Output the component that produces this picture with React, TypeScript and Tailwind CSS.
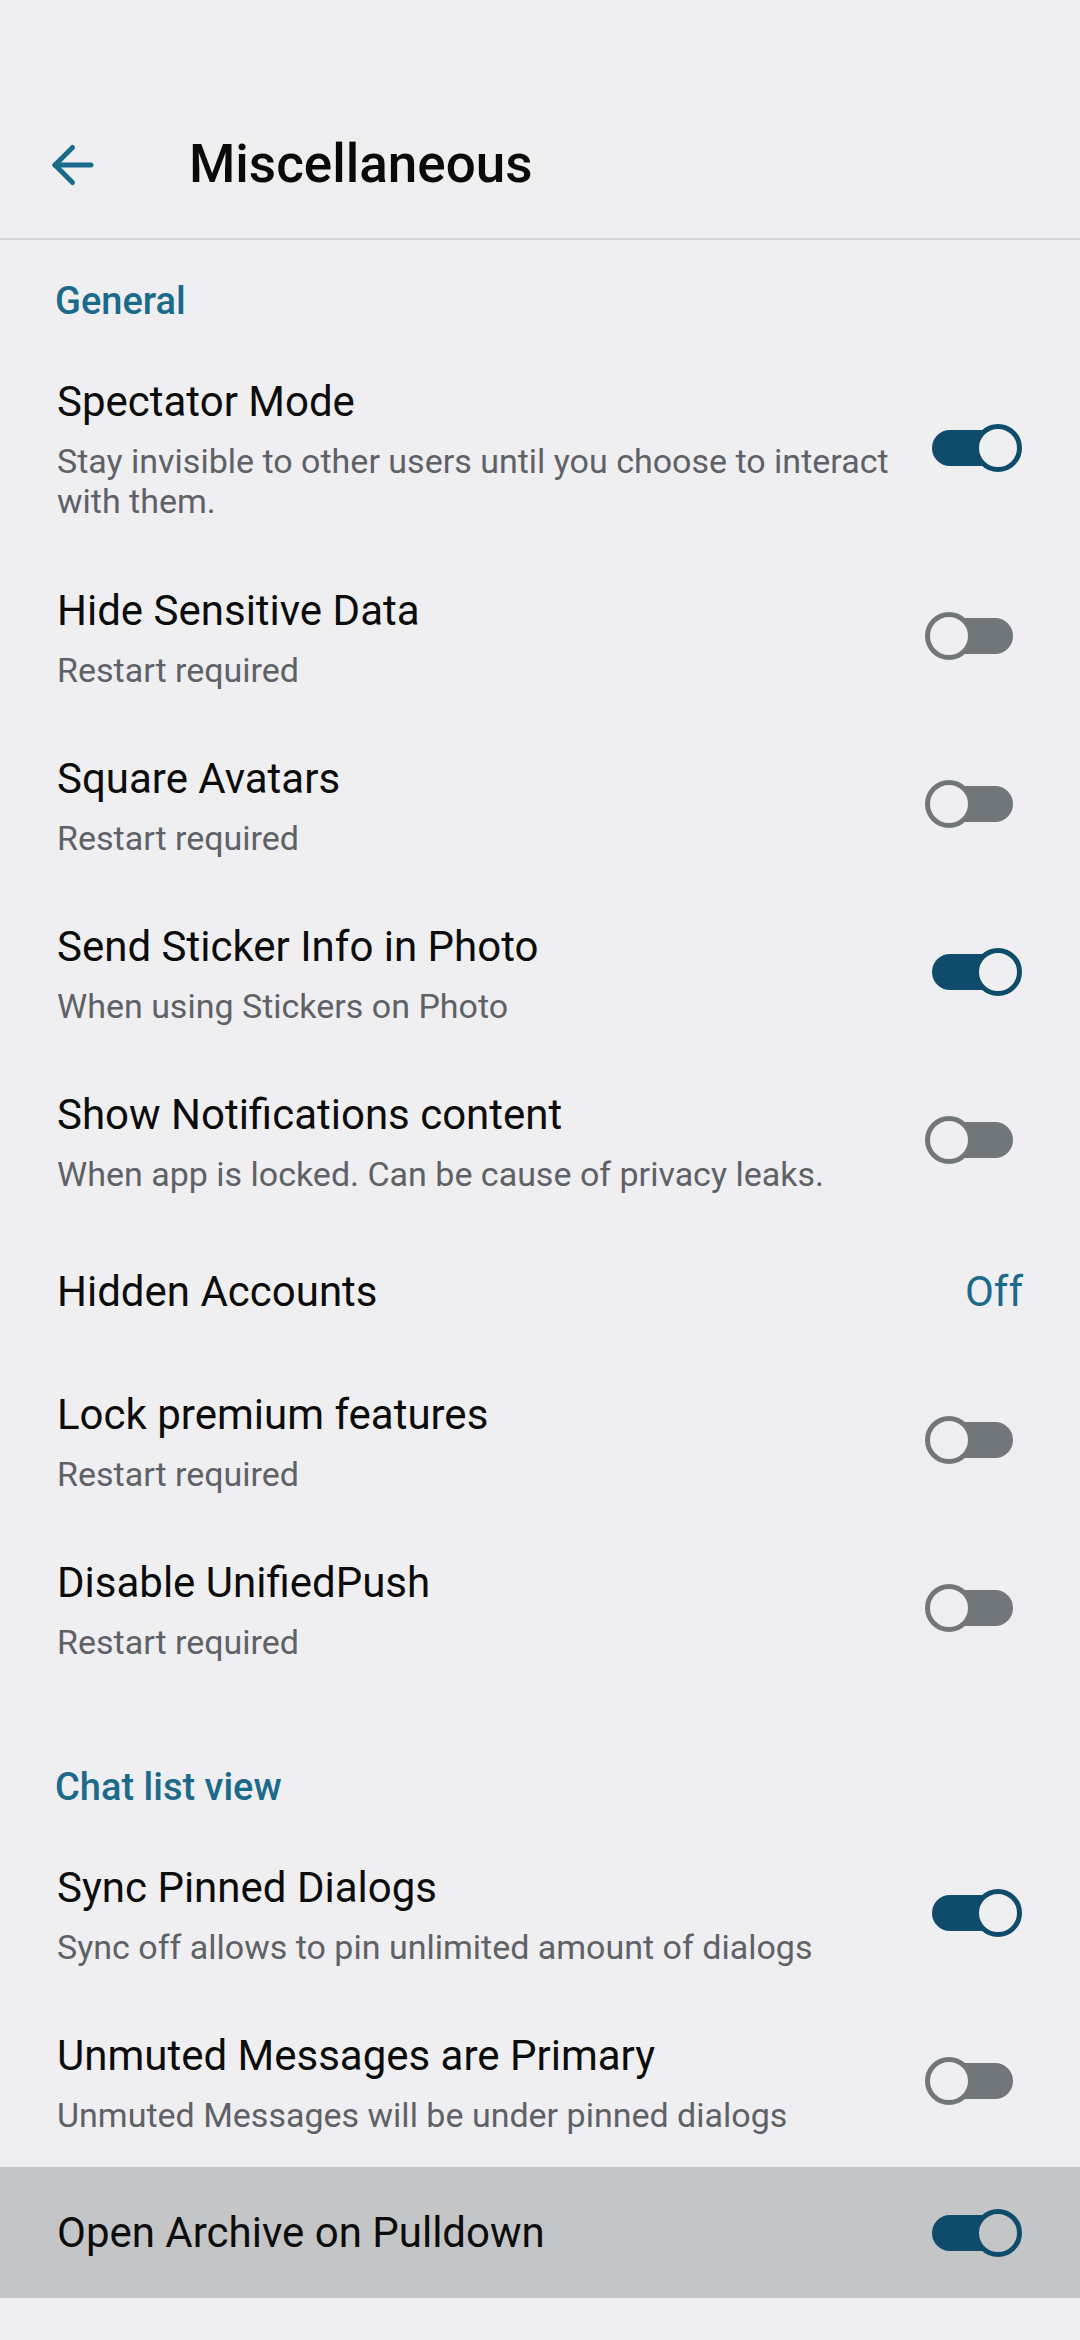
import React from "react";

type Row =
	| { kind: "header"; label: string; gap?: boolean }
	| { kind: "check"; title: string; sub?: string; on: boolean; highlight?: boolean }
	| { kind: "value"; title: string; value: string };

const rows: Row[] = [
	{ kind: "header", label: "General" },
	{
		kind: "check",
		title: "Spectator Mode",
		sub: "Stay invisible to other users until you choose to interact with them.",
		on: true,
	},
	{ kind: "check", title: "Hide Sensitive Data", sub: "Restart required", on: false },
	{ kind: "check", title: "Square Avatars", sub: "Restart required", on: false },
	{ kind: "check", title: "Send Sticker Info in Photo", sub: "When using Stickers on Photo", on: true },
	{
		kind: "check",
		title: "Show Notifications content",
		sub: "When app is locked. Can be cause of privacy leaks.",
		on: false,
	},
	{ kind: "value", title: "Hidden Accounts", value: "Off" },
	{ kind: "check", title: "Lock premium features", sub: "Restart required", on: false },
	{ kind: "check", title: "Disable UnifiedPush", sub: "Restart required", on: false },
	{ kind: "header", label: "Chat list view", gap: true },
	{
		kind: "check",
		title: "Sync Pinned Dialogs",
		sub: "Sync off allows to pin unlimited amount of dialogs",
		on: true,
	},
	{
		kind: "check",
		title: "Unmuted Messages are Primary",
		sub: "Unmuted Messages will be under pinned dialogs",
		on: false,
	},
	{ kind: "check", title: "Open Archive on Pulldown", on: true, highlight: true },
	{ kind: "check", title: "", on: false },
];

function Toggle({ on, highlight }: { on: boolean; highlight?: boolean }) {
	const knobBg = highlight ? "bg-[#c4c5c7]" : "bg-[#efeff1]";
	return (
		<div className="relative h-[48px] w-[97px] shrink-0">
			<div
				className={`absolute left-[7px] top-[6px] h-[36px] w-[81px] rounded-full ${
					on ? "bg-[#0f4c6b]" : "bg-[#71767b]"
				}`}
			/>
			<div
				className={`absolute top-0 h-[48px] w-[48px] rounded-full border-[5px] ${knobBg} ${
					on ? "left-[49px] border-[#0f4c6b]" : "left-0 border-[#71767b]"
				}`}
			/>
		</div>
	);
}

function CheckRow({ row, tall }: { row: Extract<Row, { kind: "check" }>; tall?: boolean }) {
	const bg = row.highlight ? "bg-[#c4c5c7]" : "";
	if (!row.sub) {
		return (
			<div className={`flex h-[131px] items-center gap-[20px] pl-[57px] pr-[58px] ${bg}`}>
				<div className="flex-1 text-[42px] leading-[50px] text-[#0c0c0c]">{row.title}</div>
				<Toggle on={row.on} highlight={row.highlight} />
			</div>
		);
	}
	return (
		<div className={`flex min-h-[168px] items-center gap-[20px] pl-[57px] pr-[58px] ${bg}`}>
			<div className={`flex-1 self-start pt-[32px] ${tall ? "pb-[33px]" : "pb-[32px]"}`}>
				<div className="text-[42px] leading-[50px] text-[#0c0c0c]">{row.title}</div>
				<div className="mt-[14px] text-[34px] leading-[40px] text-[#5e6166]">{row.sub}</div>
			</div>
			<div className="mb-[4px]">
				<Toggle on={row.on} highlight={row.highlight} />
			</div>
		</div>
	);
}

export default function App() {
	return (
		<div className="min-h-screen bg-[#efeff1] font-['Roboto',sans-serif]">
			<header className="border-b-[2px] border-[#d5d5d8] pt-[92px]">
				<div className="flex h-[146px] items-center">
					<svg
						className="ml-[49px] h-[48px] w-[48px]"
						viewBox="0 0 48 48"
						fill="none"
						stroke="#1a6a8b"
						strokeWidth="5"
						strokeLinecap="round"
						strokeLinejoin="round"
					>
						<path d="M6 24H42" />
						<path d="M6 24L23.5 6.5" />
						<path d="M6 24L23.5 41.5" />
					</svg>
					<h1 className="ml-[92px] text-[53px] font-medium text-[#0a0a0a]">Miscellaneous</h1>
				</div>
			</header>

			<div className="overflow-hidden">
				{rows.map((row, i) => {
					if (row.kind === "header") {
						return (
							<div
								key={i}
								className={`h-[105px] pl-[55px] pt-[39px] text-[38px] font-medium leading-[44px] text-[#1b6a8c] ${
									row.gap ? "mt-[32px]" : ""
								}`}
							>
								{row.label}
							</div>
						);
					}
					if (row.kind === "value") {
						return (
							<div key={i} className="flex h-[132px] items-center justify-between pl-[57px] pr-[57px]">
								<span className="text-[42px] leading-[50px] text-[#0c0c0c]">{row.title}</span>
								<span className="text-[42px] leading-[50px] text-[#1b6a8c]">{row.value}</span>
							</div>
						);
					}
					return <CheckRow key={i} row={row} tall={i === 1} />;
				})}
			</div>
		</div>
	);
}
